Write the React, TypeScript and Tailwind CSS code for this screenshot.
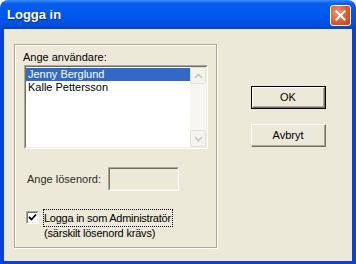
import React from 'react';

const sans = "font-['Liberation_Sans',Arial,sans-serif]";

const ClassicButton: React.FC<{ label: string; isDefault?: boolean }> = ({ label, isDefault }) => {
  const face = (
    <div className="flex-1 flex border-t border-l border-t-white border-l-white border-r border-b border-r-[#716f64] border-b-[#716f64]">
      <div className="flex-1 flex items-center justify-center border-r border-b border-r-[#aca899] border-b-[#aca899] text-black leading-[13px]">
        {label}
      </div>
    </div>
  );
  if (isDefault) {
    return <div className="w-[75px] h-[23px] flex border border-black bg-[#ece9d8]">{face}</div>;
  }
  return <div className="w-[75px] h-[23px] flex bg-[#ece9d8]">{face}</div>;
};

const Chevron: React.FC<{ up?: boolean }> = ({ up }) => (
  <svg width="9" height="6" viewBox="0 0 9 6">
    <path d={up ? 'M1 5 L4.5 1.5 L8 5' : 'M1 1 L4.5 4.5 L8 1'} fill="none" stroke="#c9c7ba" strokeWidth="1.6" />
  </svg>
);

const App: React.FC = () => {
  return (
    <div className={`w-[356px] h-[264px] flex flex-col text-[11px] ${sans}`}>
      {/* title bar */}
      <div className="h-[29px] shrink-0 rounded-t-[8px] flex items-center justify-between pl-[7px] pr-[5px] bg-[linear-gradient(to_bottom,#3a8cf9_0%,#0a5ded_12%,#0058ee_45%,#0052e6_80%,#0543c7_100%)]">
        <span className="text-white text-[13px] font-bold [text-shadow:1px_1px_0_#0b2e92] mt-[1px]">Logga in</span>
        <div className="w-[21px] h-[21px] rounded-[3px] border border-white flex items-center justify-center bg-[radial-gradient(circle_at_35%_35%,#f09a78_0%,#e05a30_55%,#c2401c_100%)] mt-[1px]">
          <svg width="11" height="11" viewBox="0 0 11 11">
            <path d="M1.5 1.5 L9.5 9.5 M9.5 1.5 L1.5 9.5" stroke="#fff" strokeWidth="2" strokeLinecap="square" />
          </svg>
        </div>
      </div>

      {/* client area */}
      <div className="flex-1 flex items-start bg-[#ece9d8] border-l-[4px] border-r-[4px] border-b-[3px] border-[#0842d6] pl-[10px] pt-[15px]">
        {/* group box */}
        <div className="w-[203px] h-[204px] border border-[#aca899] shadow-[inset_1px_1px_0_#fff,1px_1px_0_#fff] flex flex-col pl-[8px] pt-[6px]">
          <span className="leading-[13px] text-black">Ange användare:</span>

          {/* listbox */}
          <div className="mt-[1px] ml-[1px] w-[184px] h-[84px] flex border border-t-[#aca899] border-l-[#aca899] border-r-white border-b-white">
            <div className="flex-1 flex border border-t-[#716f64] border-l-[#716f64] border-r-[#f1efe2] border-b-[#f1efe2] bg-white">
              <div className="flex-1 flex flex-col pt-[1px]">
                <div className="h-[13px] leading-[13px] pl-[2px] bg-[#316ac5] text-white">Jenny Berglund</div>
                <div className="h-[13px] leading-[13px] pl-[2px] text-black">Kalle Pettersson</div>
              </div>
              <div className="w-[16px] flex flex-col justify-between bg-[#f7f6f1]">
                <div className="h-[17px] rounded-[2px] border border-[#e3e1d6] bg-[#f4f3ee] flex items-center justify-center">
                  <Chevron up />
                </div>
                <div className="h-[17px] rounded-[2px] border border-[#e3e1d6] bg-[#f4f3ee] flex items-center justify-center">
                  <Chevron />
                </div>
              </div>
            </div>
          </div>

          {/* password */}
          <div className="mt-[18px] flex items-center">
            <span className="w-[85px] pl-[4px] leading-[13px] text-[#2b2b2b]">Ange lösenord:</span>
            <div className="w-[71px] h-[24px] flex border border-t-[#aca899] border-l-[#aca899] border-r-white border-b-white">
              <div className="flex-1 border border-t-[#716f64] border-l-[#716f64] border-r-[#f1efe2] border-b-[#f1efe2] bg-[#ece9d8]" />
            </div>
          </div>

          {/* checkbox */}
          <div className="mt-[18px] flex items-start">
            <div className="ml-[3px] mt-[2px] w-[13px] h-[13px] flex border border-t-[#aca899] border-l-[#aca899] border-r-white border-b-white">
              <div className="flex-1 flex items-center justify-center border border-t-[#716f64] border-l-[#716f64] border-r-[#f1efe2] border-b-[#f1efe2] bg-white">
                <svg width="9" height="9" viewBox="0 0 9 9">
                  <path d="M1 4 L3.5 6.5 L8 1.5" fill="none" stroke="#000" strokeWidth="1.8" />
                </svg>
              </div>
            </div>
            <div className="ml-[4px] flex flex-col">
              <span className="h-[18px] leading-[16px] border border-dotted border-black pr-[1px] tracking-[-0.25px] text-black">Logga in som Administratör</span>
              <span className="leading-[13px] pl-[1px] tracking-[-0.2px] text-black">(särskilt lösenord krävs)</span>
            </div>
          </div>
        </div>

        {/* buttons */}
        <div className="ml-[34px] mt-[42px] flex flex-col gap-[15px]">
          <ClassicButton label="OK" isDefault />
          <ClassicButton label="Avbryt" />
        </div>
      </div>
    </div>
  );
};

export default App;
